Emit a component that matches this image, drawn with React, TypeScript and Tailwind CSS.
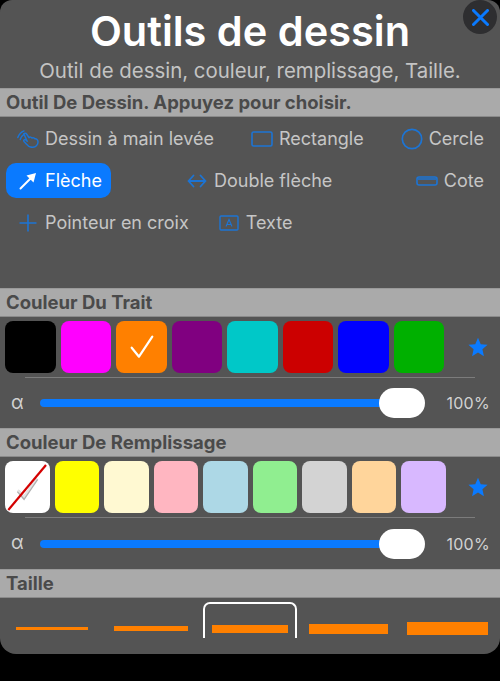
import React from 'react'

const strokeColors = ['#000000', '#ff00ff', '#ff8000', '#800080', '#00c8c8', '#cc0000', '#0000ff', '#00b000']
const fillColors = ['#ffffff', '#ffff00', '#fff9d2', '#ffb6c1', '#add8e6', '#90ee90', '#d3d3d3', '#ffd59b', '#d8b8ff']
const sizes = [
  { id: 1, className: 'w-[72px] h-[3px]' },
  { id: 2, className: 'w-[74px] h-[5px]' },
  { id: 3, className: 'w-[76px] h-[8px]' },
  { id: 4, className: 'w-[79px] h-[10px]' },
  { id: 5, className: 'w-[81px] h-[13px]' },
]

const ICON_BLUE = '#1c74d4'

function SectionBar({ title }: { title: string }) {
  return (
    <div className="h-[29px] shrink-0 bg-[#aaaaaa] border-t border-[#9a9a9a] border-b border-b-[#8a8a8a] pl-[6px] flex items-center text-[18.5px] font-bold leading-none text-[#4a4a4a]">
      {title}
    </div>
  )
}

function HandIcon() {
  return (
    <svg width="22" height="18" viewBox="0 0 22 18" fill="none" stroke={ICON_BLUE} strokeWidth="1.5" strokeLinecap="round" strokeLinejoin="round">
      <path d="M0.8 7.5C2 4.5 4 2 7 0.9" />
      <path d="M3.2 9.5C3.8 7 5 5.5 7 4.3" />
      <path d="M6.8 3.8C7.6 2.8 9 3 9.6 4L12 7.6C13.2 6.8 14.4 7 15 8C16.2 7.4 17.4 7.8 18 8.8C19.6 8.6 20.9 9.8 21 11.6C21.2 15 18.6 17.3 15.2 17.3C12.4 17.3 10.8 16 9.8 14.4L7 11.4C6.2 10.4 7.4 9 8.6 9.8L10.2 11.2L6.8 3.8Z" />
    </svg>
  )
}

function RectIcon() {
  return (
    <svg width="22" height="16" viewBox="0 0 22 16" fill="none">
      <rect x="1" y="1" width="20" height="14" rx="1.5" stroke={ICON_BLUE} strokeWidth="1.6" />
    </svg>
  )
}

function CircleIcon() {
  return (
    <svg width="22" height="22" viewBox="0 0 22 22" fill="none">
      <circle cx="11" cy="11" r="9.7" stroke={ICON_BLUE} strokeWidth="1.7" />
    </svg>
  )
}

function CoteIcon() {
  return (
    <svg width="22" height="10" viewBox="0 0 22 10" fill="none">
      <rect x="1" y="1" width="20" height="8" rx="2" stroke={ICON_BLUE} strokeWidth="1.6" />
      <path d="M2 3H20" stroke={ICON_BLUE} strokeWidth="1.6" />
    </svg>
  )
}

function TextIcon() {
  return (
    <svg width="20" height="16" viewBox="0 0 20 16" fill="none">
      <rect x="1" y="1" width="18" height="14" rx="1" stroke={ICON_BLUE} strokeWidth="1.4" />
      <path d="M7 11.5L10 4.5L13 11.5M8 9.5H12" stroke={ICON_BLUE} strokeWidth="1.1" />
    </svg>
  )
}

function DoubleArrowIcon() {
  return (
    <svg width="20" height="16" viewBox="0 0 20 16" fill="none" stroke={ICON_BLUE} strokeWidth="1.8" strokeLinecap="round" strokeLinejoin="round">
      <path d="M1.5 8H18.5M6.5 2.5L1.5 8L6.5 13.5M13.5 2.5L18.5 8L13.5 13.5" />
    </svg>
  )
}

function PlusIcon() {
  return (
    <svg width="18" height="18" viewBox="0 0 18 18" fill="none" stroke={ICON_BLUE} strokeWidth="1.6">
      <path d="M9 0.5V17.5M0.5 9H17.5" />
    </svg>
  )
}

function ArrowIcon() {
  return (
    <svg width="18" height="18" viewBox="0 0 18 18" fill="none">
      <path d="M1.5 16.5L11.5 6.5" stroke="#ffffff" strokeWidth="2" strokeLinecap="round" />
      <path d="M17 1L14.5 10.5L7.5 3.5Z" fill="#ffffff" />
    </svg>
  )
}

function CloseIcon() {
  return (
    <svg width="17" height="17" viewBox="0 0 17 17" fill="none" stroke="#0a7aff" strokeWidth="3" strokeLinecap="round">
      <path d="M1.5 1.5L15.5 15.5M15.5 1.5L1.5 15.5" />
    </svg>
  )
}

function StarIcon() {
  return (
    <svg width="20" height="20" viewBox="0 0 24 24" className="shrink-0">
      <path d="M12 1L15.3 8.6L23.5 9.4L17.3 14.8L19.1 23L12 18.7L4.9 23L6.7 14.8L0.5 9.4L8.7 8.6Z" fill="#0a7aff" />
    </svg>
  )
}

function Tool({ icon, label }: { icon: React.ReactNode; label: string }) {
  return (
    <div className="h-[35px] flex items-center gap-[6px] text-[#c6c6c6]">
      <span className="w-[22px] flex justify-center">{icon}</span>
      <span>{label}</span>
    </div>
  )
}

function AlphaSlider({ height }: { height: string }) {
  return (
    <div className={`${height} flex items-center pl-[11px] pr-[10px] text-[#d2d2d2]`}>
      <span className="w-[29px] text-[19px]">α</span>
      <div className="flex-1 flex items-center">
        <div className="h-[8px] w-[345px] rounded-l-full bg-[#0a7aff]" />
        <div className="h-[30px] w-[46px] -ml-[6px] rounded-[15px] bg-white" />
      </div>
      <span className="text-[16px] tracking-[0.3px]">100%</span>
    </div>
  )
}

export default function App() {
  return (
    <div className="w-[500px] h-[681px] bg-black overflow-hidden font-['Inter','Liberation_Sans',sans-serif]">
      <div className="relative h-[654px] bg-[#545454] rounded-t-[12px] rounded-b-[16px] overflow-hidden flex flex-col">
        <div className="absolute top-0 right-[3px] size-[34px] rounded-full bg-[#2e2e30] flex items-center justify-center">
          <CloseIcon />
        </div>
        <div className="h-[88px] shrink-0 flex flex-col items-center">
          <h1 className="mt-[8px] h-[46px] text-[41.5px] leading-[46px] font-semibold text-white">Outils de dessin</h1>
          <p className="mt-[5px] text-[20.4px] leading-[24px] text-[#c4c4c4]">Outil de dessin, couleur, remplissage, Taille.</p>
        </div>

        <SectionBar title="Outil De Dessin. Appuyez pour choisir." />
        <div className="h-[171px] shrink-0 pt-[4px] flex flex-col gap-[7px] text-[18px]">
          <div className="flex justify-between pl-[17px] pr-[16px]">
            <Tool icon={<HandIcon />} label="Dessin à main levée" />
            <Tool icon={<RectIcon />} label="Rectangle" />
            <Tool icon={<CircleIcon />} label="Cercle" />
          </div>
          <div className="flex pl-[6px] pr-[16px]">
            <div className="w-[105px] h-[35px] pl-[13px] rounded-[10px] bg-[#0a7aff] text-white flex items-center gap-[8px]">
              <ArrowIcon />
              <span>Flèche</span>
            </div>
            <div className="ml-[75px]">
              <Tool icon={<DoubleArrowIcon />} label="Double flèche" />
            </div>
            <div className="ml-auto">
              <Tool icon={<CoteIcon />} label="Cote" />
            </div>
          </div>
          <div className="flex pl-[17px] gap-[29px]">
            <Tool icon={<PlusIcon />} label="Pointeur en croix" />
            <Tool icon={<TextIcon />} label="Texte" />
          </div>
        </div>

        <SectionBar title="Couleur Du Trait" />
        <div className="flex items-start justify-between h-[60px] shrink-0 pl-[5px] pr-[12px] pt-[4px]">
          <div className="flex gap-[5px]">
            {strokeColors.map((c, i) => (
              <div key={c} className="w-[50.5px] h-[52px] rounded-[8px]" style={{ backgroundColor: c }}>
                {i === 2 && (
                  <svg width="50" height="52" viewBox="0 0 50 52" fill="none">
                    <path d="M15.7 26.7L23 35.7L36.3 15.7" stroke="#ffffff" strokeWidth="2.2" strokeLinecap="round" strokeLinejoin="round" />
                  </svg>
                )}
              </div>
            ))}
          </div>
          <div className="self-center -mt-[4px]">
            <StarIcon />
          </div>
        </div>
        <div className="mx-[25px] border-t border-[#7c7c7c]" />
        <AlphaSlider height="h-[50px] shrink-0" />

        <SectionBar title="Couleur De Remplissage" />
        <div className="flex items-start justify-between h-[60px] shrink-0 pl-[5px] pr-[12px] pt-[4px]">
          <div className="flex gap-[5px]">
            {fillColors.map((c, i) => (
              <div key={c} className="w-[44.5px] h-[52px] rounded-[8px] overflow-hidden" style={{ backgroundColor: c }}>
                {i === 0 && (
                  <svg width="44" height="52" viewBox="0 0 44 52" fill="none">
                    <path d="M13 30L19 37L32 18" stroke="#b0b0b0" strokeWidth="3" />
                    <path d="M13 29L19 35.7L31.7 17" stroke="#e4e4e4" strokeWidth="2" />
                    <path d="M3.3 49L41 4" stroke="#d40000" strokeWidth="2.2" />
                  </svg>
                )}
              </div>
            ))}
          </div>
          <div className="self-center -mt-[5px]">
            <StarIcon />
          </div>
        </div>
        <div className="mx-[25px] border-t border-[#7c7c7c]" />
        <AlphaSlider height="h-[51px] shrink-0" />

        <SectionBar title="Taille" />
        <div className="flex-1 grid grid-cols-5 pl-[2px] pr-[3px]">
          {sizes.map((s) => (
            <div key={s.id} className="relative h-[57px] pt-[4px] flex items-center justify-center">
              {s.id === 3 && (
                <div className="absolute top-[4px] left-[3px] h-[36px] w-[94px] rounded-t-[7px] border-x-2 border-t-2 border-white" />
              )}
              <div className={`${s.className} bg-[#ff8000]`} />
            </div>
          ))}
        </div>
      </div>
    </div>
  )
}
